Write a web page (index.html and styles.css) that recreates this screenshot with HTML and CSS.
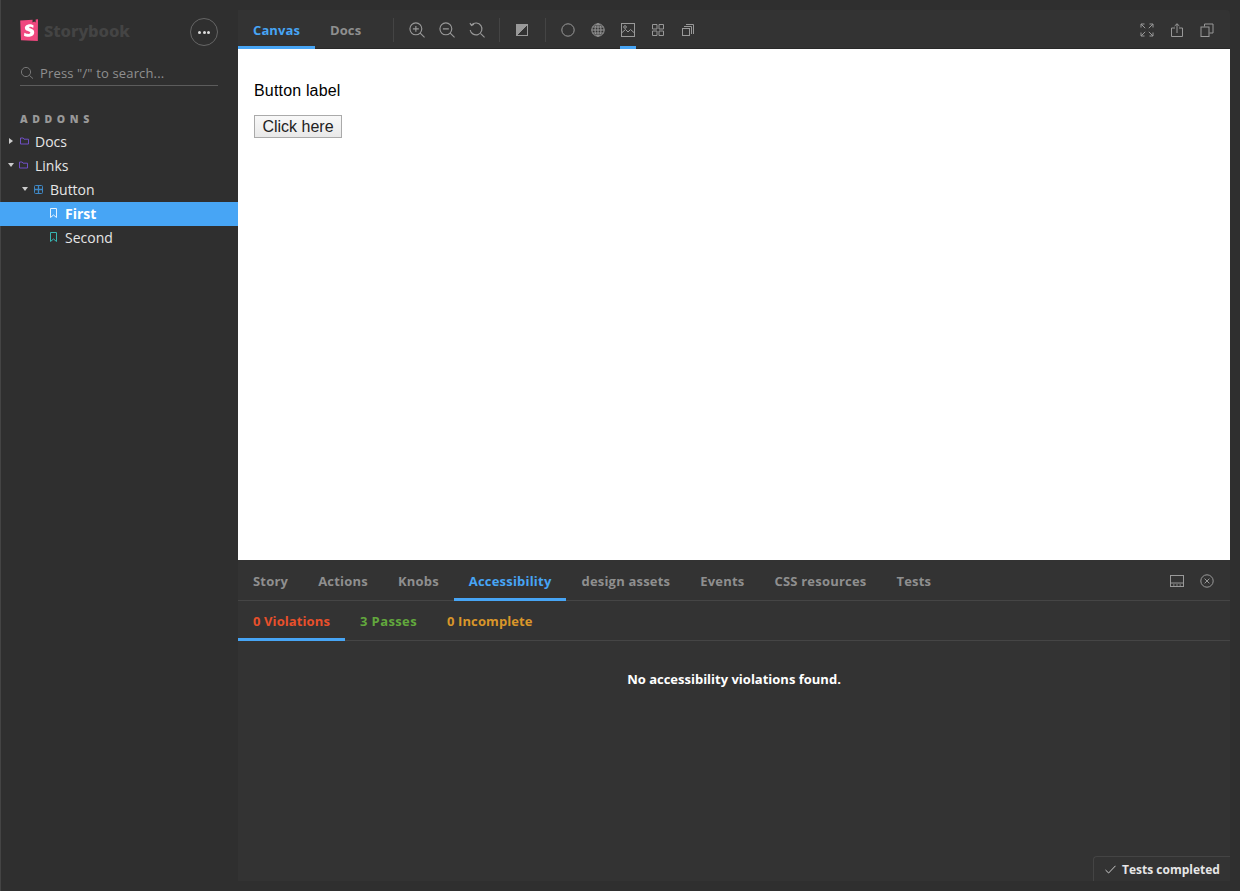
FILE: index.html
```html
<!DOCTYPE html>
<html>
<head>
    <title>Storybook</title>
    <link rel="stylesheet" href="styles.css">
</head>
<body>
    <div class="sidebar">
        <div class="brand">
            <svg class="logo" width="18" height="22" viewBox="0 0 18 22">
                <path d="M0.2 1.4 L12.6 0.7 L12.5 3.4 L14.2 2.4 L15.6 3.4 L15.7 0.4 L18 0.2 L17.8 22 L1 21.2 Z" fill="#f0487f"/>
                <path d="M13.6 6.6 C12.4 5.4 10.2 5 8.2 5.4 C5.2 6 4.2 8.2 5.2 10.2 C6.2 12.2 10.2 12 10.4 13.6 C10.6 15.2 7.6 15.6 4.4 13.8 L4 16.8 C7.2 18.6 14 18.4 14.2 13.2 C14.3 9.6 9.4 10 9.2 8.6 C9.1 7.4 11.4 7.6 13.2 9 Z" fill="#fff"/>
            </svg>
            <span class="brand-name">Storybook</span>
            <button class="menu-btn"><span></span><span></span><span></span></button>
        </div>
        <div class="search">
            <svg width="14" height="14" viewBox="0 0 14 14" fill="none" stroke="#777" stroke-width="1">
                <circle cx="6" cy="6" r="4.6"/>
                <path d="M9.4 9.4 L13 12.6"/>
            </svg>
            <span>Press "/" to search...</span>
        </div>
        <div class="section-title">ADDONS</div>
        <ul class="tree">
            <li class="tree-row">
                <i class="arrow arrow-right"></i>
                <svg class="tree-icon" width="9" height="10" viewBox="0 0 9 10" fill="none" stroke="#6f4fc4"><path d="M0.5 2 V8 H8.5 V3.2 H4 L3.2 2 H0.5 Z"/></svg>
                <span>Docs</span>
            </li>
            <li class="tree-row">
                <i class="arrow arrow-down"></i>
                <svg class="tree-icon" width="9" height="10" viewBox="0 0 9 10" fill="none" stroke="#6f4fc4"><path d="M0.5 2 V8 H8.5 V3.2 H4 L3.2 2 H0.5 Z"/></svg>
                <span>Links</span>
            </li>
            <li class="tree-row depth-1">
                <i class="arrow arrow-down"></i>
                <svg class="tree-icon" width="9" height="9" viewBox="0 0 9 9" fill="none" stroke="#3f88c5"><rect x="0.5" y="0.5" width="8" height="8" rx="1"/><path d="M4.5 1 V8 M1 4.5 H8" stroke-width="1.3"/></svg>
                <span>Button</span>
            </li>
            <li class="tree-row depth-2 selected">
                <svg class="tree-icon" width="7" height="10" viewBox="0 0 7 10" fill="none" stroke="#e6f3fe"><path d="M0.5 0.5 H6.5 V9.5 L3.5 7 L0.5 9.5 Z"/></svg>
                <span>First</span>
            </li>
            <li class="tree-row depth-2">
                <svg class="tree-icon" width="7" height="10" viewBox="0 0 7 10" fill="none" stroke="#37b5b3"><path d="M0.5 0.5 H6.5 V9.5 L3.5 7 L0.5 9.5 Z"/></svg>
                <span>Second</span>
            </li>
        </ul>
    </div>

    <div class="main">
        <div class="toolbar">
            <div class="tab active">Canvas</div>
            <div class="tab">Docs</div>
            <div class="divider first-divider"></div>
            <svg class="tool tool-lg" viewBox="0 0 14 14"><circle cx="6" cy="6" r="5.2"/><path d="M9.8 9.8 L13.6 13.4 M6 3.4 V8.6 M3.4 6 H8.6"/></svg>
            <svg class="tool tool-lg" viewBox="0 0 14 14"><circle cx="6" cy="6" r="5.2"/><path d="M9.8 9.8 L13.6 13.4 M3.4 6 H8.6"/></svg>
            <svg class="tool tool-lg" viewBox="0 0 14 14"><path d="M2.4 2.4 A5.2 5.2 0 1 1 1 7 M0.8 1 L2.2 3 L4.4 2 M9.8 9.8 L13.6 13.4"/></svg>
            <div class="divider"></div>
            <svg class="tool tool-sm" viewBox="0 0 12 12"><rect x="0.5" y="0.5" width="11" height="11"/><path class="solid" d="M0.5 0.5 H11.5 L0.5 11.5 Z"/></svg>
            <div class="divider wide-divider"></div>
            <svg class="tool" viewBox="0 0 14 14"><circle cx="7" cy="7" r="6.2"/></svg>
            <svg class="tool" viewBox="0 0 14 14"><circle cx="7" cy="7" r="6.2"/><ellipse cx="7" cy="7" rx="3" ry="6.2"/><path d="M7 0.8 V13.2 M0.8 7 H13.2 M1.6 4 H12.4 M1.6 10 H12.4"/></svg>
            <div class="tool-on">
                <svg class="tool" viewBox="0 0 14 14"><rect x="0.5" y="0.5" width="13" height="13"/><circle cx="4" cy="4" r="1.3"/><path d="M0.5 10 L4.5 6.5 L7 9 L9.5 6.5 L13.5 10"/></svg>
            </div>
            <svg class="tool tool-sm" viewBox="0 0 12 12"><path d="M0.5 0.5 H5 V5 H0.5 Z M7 0.5 H11.5 V5 H7 Z M0.5 7 H5 V11.5 H0.5 Z M7 7 H11.5 V11.5 H7 Z"/></svg>
            <svg class="tool tool-sm" viewBox="0 0 12 12"><rect x="0.5" y="4.5" width="7" height="7"/><path d="M2 2.5 H9.5 V10 M4 0.5 H11.5 V10"/></svg>
            <div class="toolbar-right">
                <svg class="tool" viewBox="0 0 14 14"><path d="M1 1 L5.2 5.2 M13 1 L8.8 5.2 M1 13 L5.2 8.8 M13 13 L8.8 8.8 M1 4.5 V1 H4.5 M9.5 1 H13 V4.5 M1 9.5 V13 H4.5 M9.5 13 H13 V9.5"/></svg>
                <svg class="tool" viewBox="0 0 14 14"><path d="M5 5 H1.5 V13.5 H12.5 V5 H9 M7 10 V0.8 M4.6 3 L7 0.8 L9.4 3"/></svg>
                <svg class="tool" viewBox="0 0 14 14"><rect x="1" y="4" width="8" height="9.5"/><path d="M4.5 3.5 V1 H13 V10 H9.5"/></svg>
            </div>
        </div>
        <div class="canvas">
            <p class="story-label">Button label</p>
            <button class="story-btn">Click here</button>
        </div>
        <div class="panel">
            <div class="panel-tabs">
                <div class="tab">Story</div>
                <div class="tab">Actions</div>
                <div class="tab">Knobs</div>
                <div class="tab active">Accessibility</div>
                <div class="tab">design assets</div>
                <div class="tab">Events</div>
                <div class="tab">CSS resources</div>
                <div class="tab">Tests</div>
                <div class="toolbar-right">
                    <svg class="tool" viewBox="0 0 14 14"><rect x="0.5" y="1.5" width="13" height="11"/><path d="M1 9 H13 M3 11 H4.5 M6.2 11 H7.8 M9.5 11 H11"/></svg>
                    <svg class="tool" viewBox="0 0 14 14"><circle cx="7" cy="7" r="6.2"/><path d="M4.6 4.6 L9.4 9.4 M9.4 4.6 L4.6 9.4"/></svg>
                </div>
            </div>
            <div class="a11y-tabs">
                <div class="tab active violations">0 Violations</div>
                <div class="tab passes">3 Passes</div>
                <div class="tab incomplete">0 Incomplete</div>
            </div>
            <div class="a11y-empty">No accessibility violations found.</div>
        </div>
        <div class="toast">
            <svg width="11" height="9" viewBox="0 0 11 9" fill="none" stroke="#ccc"><path d="M0.5 5 L3.6 8 L10.5 0.8"/></svg>
            <span>Tests completed</span>
        </div>
    </div>
</body>
</html>
```

FILE: styles.css
```css
* {
    box-sizing: border-box;
}
html, body {
    height: 100%;
}
body {
    margin: 0;
    display: flex;
    height: 891px;
    overflow: hidden;
    background: #2f2f2f;
    box-shadow: inset 1px 0 0 #444;
    color: #fff;
    font-family: "Open Sans", "Noto Sans", sans-serif;
}
.sidebar {
    width: 238px;
    flex: none;
}
.brand {
    display: flex;
    align-items: center;
    height: 22px;
    margin: 19px 20px 0;
}
.logo {
    flex: none;
}
.brand-name {
    margin-left: 6px;
    font-family: "Noto Sans", sans-serif;
    font-size: 16.6px;
    font-weight: 800;
    letter-spacing: -0.1px;
    color: #444;
}
.menu-btn {
    margin: 4px 0 0 auto;
    width: 28px;
    height: 28px;
    display: flex;
    align-items: center;
    justify-content: center;
    gap: 1.5px;
    padding: 0;
    background: none;
    border: 1px solid #666;
    border-radius: 50%;
}
.menu-btn span {
    width: 3px;
    height: 3px;
    border-radius: 50%;
    background: #ddd;
}
.search {
    display: flex;
    align-items: center;
    gap: 6px;
    height: 25px;
    margin: 20px 20px 0;
    border-bottom: 1px solid #5c5c5c;
    font-size: 13px;
    letter-spacing: 0.15px;
    color: #8f8f8f;
}
.section-title {
    margin: 26px 0 0 20px;
    font-size: 10.5px;
    line-height: 14px;
    font-weight: 800;
    letter-spacing: 4.6px;
    color: #999;
}
.tree {
    list-style: none;
    margin: 4px 0 0;
    padding: 0;
}
.tree-row {
    display: flex;
    align-items: center;
    height: 24px;
    padding: 0 0 2px 8px;
    font-size: 14px;
    color: #e6e6e6;
}
.tree-icon {
    flex: none;
    margin: 0 6px 0 7px;
}
.arrow {
    width: 0;
    height: 0;
    flex: none;
    border-style: solid;
}
.arrow-right {
    margin-left: 1px;
    border-width: 3.5px 0 3.5px 4px;
    border-color: transparent transparent transparent #ccc;
}
.arrow-down {
    border-width: 4px 3.5px 0 3.5px;
    border-color: #ccc transparent transparent transparent;
}
.arrow-down + .tree-icon {
    margin: 0 7px 0 5px;
}
.depth-1 {
    padding-left: 22px;
}
.depth-1 .arrow-down + .tree-icon {
    margin-left: 6px;
}
.depth-2 {
    padding-left: 43px;
}
.depth-2 .tree-icon {
    margin-right: 8px;
}
.selected {
    background: #47a5f5;
    color: #fff;
    font-weight: 700;
}
.main {
    position: relative;
    flex: 1;
    display: flex;
    flex-direction: column;
    margin: 10px 10px 10px 0;
    background: #333;
    border-radius: 0 4px 4px 0;
}
.toolbar {
    display: flex;
    align-items: center;
    height: 39px;
    flex: none;
    box-shadow: inset 0 -1px 0 #292929;
}
.tab {
    height: 100%;
    display: flex;
    align-items: center;
    padding: 3px 15px 0;
    font-size: 13px;
    font-weight: 700;
    letter-spacing: 0.1px;
    color: #8f8f8f;
    border-bottom: 3px solid transparent;
}
.tab.active {
    color: #47a5f5;
    border-bottom-color: #47a5f5;
}
.divider {
    width: 1px;
    height: 24px;
    margin: 0 7px;
    background: #444;
}
.first-divider {
    margin: 0 8px 0 17px;
}
.wide-divider {
    margin-left: 8px;
}
.tool {
    width: 14px;
    height: 14px;
    margin: 0 8px;
    fill: none;
    stroke: #999;
    stroke-width: 1;
    flex: none;
}
.tool .solid {
    fill: #999;
}
.tool-lg {
    width: 16px;
    height: 16px;
    margin: 0 7px;
}
.tool-sm {
    width: 12px;
    height: 12px;
    margin: 0 9px;
}
.tool-on {
    height: 100%;
    width: 16px;
    margin: 0 7px;
    display: flex;
    align-items: center;
    justify-content: center;
    padding-top: 3px;
    border-bottom: 3px solid #47a5f5;
}
.tool-on .tool {
    margin: 0;
}
.toolbar-right {
    display: flex;
    align-items: center;
    margin-left: auto;
    padding-right: 8px;
}
.canvas {
    height: 511px;
    flex: none;
    padding: 1px 16px;
    background: #fff;
    color: #000;
    font-family: "Liberation Sans", sans-serif;
}
.story-label {
    margin: 32px 0 0;
    font-size: 16px;
    line-height: 18px;
    letter-spacing: 0.17px;
}
.story-btn {
    display: block;
    margin-top: 15px;
    width: 88px;
    height: 23px;
    padding: 0;
    font-family: "Liberation Sans", sans-serif;
    font-size: 16px;
    color: #222;
    background: linear-gradient(#f8f8f8, #e9e9e9);
    border: 1px solid #aaa;
}
.panel {
    flex: 1;
    display: flex;
    flex-direction: column;
}
.panel-tabs {
    display: flex;
    align-items: center;
    height: 41px;
    flex: none;
    box-shadow: inset 0 -1px 0 #454545;
}
.panel-tabs .tab {
    padding-top: 4px;
    letter-spacing: 0.2px;
}
.a11y-tabs {
    display: flex;
    height: 40px;
    flex: none;
    box-shadow: inset 0 -1px 0 #454545;
}
.tab.violations {
    color: #e8502b;
}
.tab.passes {
    color: #62a83d;
    letter-spacing: 0.4px;
}
.tab.incomplete {
    color: #d9962a;
}
.a11y-empty {
    margin-top: 29px;
    text-align: center;
    font-size: 13px;
    font-weight: 700;
    line-height: 18px;
}
.toast {
    position: absolute;
    right: 0;
    bottom: 0;
    display: flex;
    align-items: center;
    gap: 6px;
    width: 137px;
    height: 25px;
    padding-left: 11px;
    background: #333;
    border: 1px solid #444;
    border-right: 0;
    border-bottom: 0;
    border-radius: 4px 0 0 0;
    font-size: 12px;
    font-weight: 700;
    color: #e6e6e6;
}
```
